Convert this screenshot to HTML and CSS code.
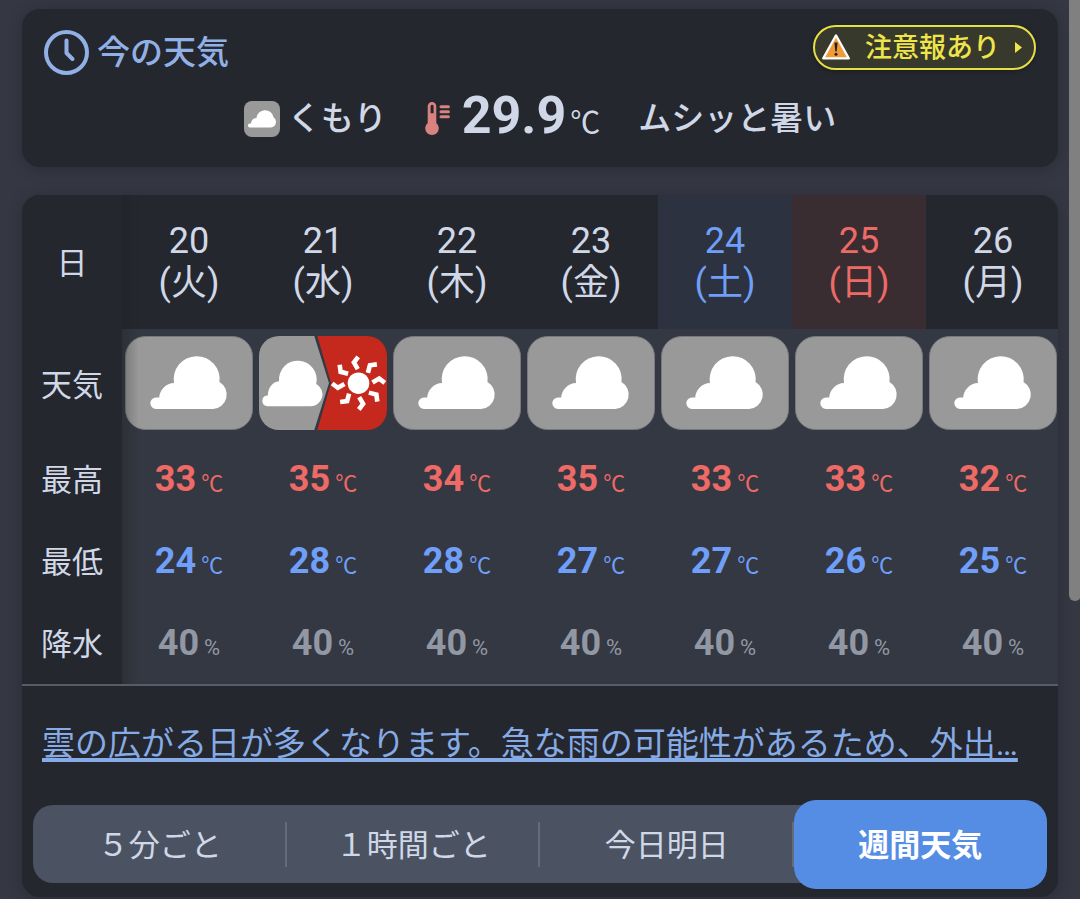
FILE: index.html
```html
<!DOCTYPE html>
<html lang="ja">
<head>
    <meta charset="UTF-8">
    <meta name="viewport" content="width=device-width, initial-scale=1.0">
    <title>今の天気</title>
    <link rel="stylesheet" href="styles.css">
</head>
<body>
    <!-- Shared icons -->
    <svg class="icon-defs" aria-hidden="true">
        <symbol id="cloudy" viewBox="0 0 128 94">
            <rect x="0.5" y="0.5" width="127" height="93" rx="20" fill="#999999" stroke="#77797d"/>
            <path fill="#fff" d="M31 73A5.7 5.7 0 0 1 31 61.6H34.2A15.5 15.5 0 0 1 49 47A23 23 0 1 1 94.5 46A14.5 14.5 0 0 1 88 73Z"/>
        </symbol>
        <symbol id="cloudy-sunny" viewBox="0 0 128 94">
            <clipPath id="tile"><rect width="128" height="94" rx="20"/></clipPath>
            <g clip-path="url(#tile)">
                <path fill="#999999" d="M0 0H55.3L70 47L55.3 94H0Z"/>
                <path fill="#c5281c" d="M58.3 0H128V94H58.3L72 47Z"/>
            </g>
            <path fill="#fff" d="M8 70.2A5.4 5.4 0 0 1 8 59.5H8.9A12 14 0 0 1 20 45.2A18.9 18.9 0 1 1 57.2 48A11.8 11.8 0 0 1 51 70.2Z"/>
            <g transform="translate(99.5 47.2)" fill="none" stroke="#fff" stroke-width="4.6">
                <circle r="10.8" fill="#fff" stroke="none"/>
                <path id="ray" d="M-0.3 -26.3L-4.6 -20.7L-0.7 -14"/>
                <use href="#ray" transform="rotate(45)"/>
                <use href="#ray" transform="rotate(90)"/>
                <use href="#ray" transform="rotate(135)"/>
                <use href="#ray" transform="rotate(180)"/>
                <use href="#ray" transform="rotate(225)"/>
                <use href="#ray" transform="rotate(270)"/>
                <use href="#ray" transform="rotate(315)"/>
            </g>
        </symbol>
    </svg>

    <main class="page">
        <!-- Current weather -->
        <section class="card now">
            <div class="now-head">
                <h1 class="now-title">
                    <svg class="clock" viewBox="0 0 45 45" fill="none" stroke="#91b0e6" stroke-width="4" aria-hidden="true">
                        <circle cx="22.5" cy="22.5" r="20.5"/>
                        <path d="M22.5 10.5V23L28.5 29" stroke-linecap="round" stroke-linejoin="round"/>
                    </svg>
                    今の天気
                </h1>
                <a class="alert" href="#">
                    <svg class="alert-mark" viewBox="0 0 30 28" aria-hidden="true">
                        <path d="M15 1.4L27.8 24.4H2.2Z" fill="#f39a38" stroke="#fff" stroke-width="2.2" stroke-linejoin="round"/>
                        <path d="M13.4 8.5H16.6L15.7 17.5H14.3Z" fill="#222"/>
                        <circle cx="15" cy="20.2" r="1.5" fill="#222"/>
                    </svg>
                    <span>注意報あり</span>
                    <svg class="alert-arrow" viewBox="0 0 7 11" aria-hidden="true"><path d="M0 0L7 5.5L0 11Z" fill="#efe44a"/></svg>
                </a>
            </div>
            <div class="now-body">
                <div class="now-sky">
                    <svg class="sky-icon" viewBox="0 0 36 36" aria-hidden="true">
                        <rect width="36" height="36" rx="8" fill="#999999"/>
                        <path fill="#fff" d="M6 26.6A2.1 2.1 0 0 1 6 22.4H7A6 6 0 0 1 12.4 17A8.7 8.7 0 0 1 29.6 16.2A5.8 5.8 0 0 1 27 26.6Z"/>
                    </svg>
                    くもり
                </div>
                <div class="now-temp">
                    <svg class="thermo" viewBox="0 0 25 34" aria-hidden="true">
                        <path fill="#d88380" fill-rule="evenodd" d="M2.7 4.3A4.3 4.3 0 0 1 11.3 4.3V21A6.8 6.8 0 1 1 2.7 21ZM5.6 4.2V11.3H8.6V4.2A1.5 1.5 0 0 0 5.6 4.2Z"/>
                        <path stroke="#d88380" stroke-width="3" stroke-linecap="round" d="M16 4.8H23.4M16 9.8H23.4M16 14.8H23.4"/>
                    </svg>
                    <span><b>29.9</b><small>℃</small></span>
                </div>
                <div>ムシッと暑い</div>
            </div>
        </section>

        <!-- Weekly forecast -->
        <section class="card week">
            <div class="week-wrap">
                <div class="week-scroll">
                    <table class="week-table">
                        <thead>
                            <tr>
                                <th class="label" scope="col">日</th>
                                <th scope="col">20<br>(火)</th>
                                <th scope="col">21<br>(水)</th>
                                <th scope="col">22<br>(木)</th>
                                <th scope="col">23<br>(金)</th>
                                <th class="sat" scope="col">24<br>(土)</th>
                                <th class="sun" scope="col">25<br>(日)</th>
                                <th scope="col">26<br>(月)</th>
                            </tr>
                        </thead>
                        <tbody>
                            <tr class="sky">
                                <th class="label" scope="row">天気</th>
                                <td><svg viewBox="0 0 128 94"><use href="#cloudy"/></svg></td>
                                <td><svg viewBox="0 0 128 94"><use href="#cloudy-sunny"/></svg></td>
                                <td><svg viewBox="0 0 128 94"><use href="#cloudy"/></svg></td>
                                <td><svg viewBox="0 0 128 94"><use href="#cloudy"/></svg></td>
                                <td><svg viewBox="0 0 128 94"><use href="#cloudy"/></svg></td>
                                <td><svg viewBox="0 0 128 94"><use href="#cloudy"/></svg></td>
                                <td><svg viewBox="0 0 128 94"><use href="#cloudy"/></svg></td>
                            </tr>
                            <tr class="high">
                                <th class="label" scope="row">最高</th>
                                <td><b>33</b><small>℃</small></td>
                                <td><b>35</b><small>℃</small></td>
                                <td><b>34</b><small>℃</small></td>
                                <td><b>35</b><small>℃</small></td>
                                <td><b>33</b><small>℃</small></td>
                                <td><b>33</b><small>℃</small></td>
                                <td><b>32</b><small>℃</small></td>
                            </tr>
                            <tr class="low">
                                <th class="label" scope="row">最低</th>
                                <td><b>24</b><small>℃</small></td>
                                <td><b>28</b><small>℃</small></td>
                                <td><b>28</b><small>℃</small></td>
                                <td><b>27</b><small>℃</small></td>
                                <td><b>27</b><small>℃</small></td>
                                <td><b>26</b><small>℃</small></td>
                                <td><b>25</b><small>℃</small></td>
                            </tr>
                            <tr class="rain">
                                <th class="label" scope="row">降水</th>
                                <td><b>40</b><small>%</small></td>
                                <td><b>40</b><small>%</small></td>
                                <td><b>40</b><small>%</small></td>
                                <td><b>40</b><small>%</small></td>
                                <td><b>40</b><small>%</small></td>
                                <td><b>40</b><small>%</small></td>
                                <td><b>40</b><small>%</small></td>
                            </tr>
                        </tbody>
                    </table>
                </div>
            </div>

            <a class="comment" href="#">雲の広がる日が多くなります。急な雨の可能性があるため、外出…</a>

            <nav class="tabs">
                <button type="button">５分ごと</button>
                <button type="button">１時間ごと</button>
                <button type="button">今日明日</button>
                <button type="button" class="active">週間天気</button>
            </nav>
        </section>
    </main>

    <div class="scroll-thumb"></div>
</body>
</html>
```
FILE: styles.css
```css
* {
    box-sizing: border-box;
}

body {
    margin: 0;
    background: #353743;
    color: #d0d8e8;
    font-family: Roboto, "Noto Sans CJK JP", sans-serif;
    overflow: hidden;
}

.icon-defs {
    position: absolute;
    width: 0;
    height: 0;
}

.page {
    display: flex;
    flex-direction: column;
    gap: 28px;
    padding: 9px 22px 2px;
}

.card {
    background: #24272e;
    border-radius: 18px;
    box-shadow: 0 2px 16px rgba(0, 0, 0, 0.2);
}

/* Current weather */
.now {
    padding: 16px 22px 12px;
    font-size: 33px;
    font-weight: 500;
}

.now-head {
    display: flex;
    align-items: flex-start;
    justify-content: space-between;
}

.now-title {
    display: flex;
    align-items: center;
    gap: 8px;
    margin: 0;
    padding-top: 5px;
    color: #91b0e6;
    font-size: 33px;
    font-weight: 500;
    line-height: 45px;
}

.clock {
    width: 45px;
    height: 45px;
}

.alert {
    display: flex;
    align-items: center;
    height: 45px;
    padding: 0 12px 0 6px;
    border: 2px solid #e8de45;
    border-radius: 23px;
    background: #37392d;
    box-shadow: 0 1px 4px rgba(0, 0, 0, 0.3);
    color: #efe44a;
    font-size: 27px;
    line-height: 40px;
    text-decoration: none;
}

.alert-mark {
    width: 30px;
    height: 28px;
    margin-right: 14px;
}

.alert-arrow {
    width: 7px;
    height: 11px;
    margin-left: 15px;
}

.now-body {
    display: flex;
    align-items: center;
    justify-content: center;
    gap: 38px;
    height: 72px;
    margin-top: 8px;
    line-height: 48px;
}

.now-sky,
.now-temp {
    display: flex;
    align-items: center;
    gap: 8px;
}

.now-temp {
    gap: 12px;
}

.sky-icon {
    width: 36px;
    height: 36px;
}

.thermo {
    width: 25px;
    height: 34px;
}

.now-temp b {
    font-size: 52px;
    font-weight: 700;
}

.now-temp small {
    margin-left: 4px;
    font-size: 30px;
    font-weight: 400;
}

/* Weekly forecast */
.week {
    overflow: hidden;
    padding-bottom: 8px;
}

.week-wrap {
    position: relative;
    border-bottom: 2px solid #575c66;
}

/* shade beside the fixed label column */
.week-wrap::after {
    content: "";
    position: absolute;
    top: 0;
    bottom: 0;
    left: 100px;
    width: 16px;
    background: linear-gradient(to right, rgba(32, 32, 32, 0.3), rgba(32, 32, 32, 0));
    pointer-events: none;
}

.week-scroll {
    overflow-x: auto;
    scrollbar-width: none;
}

.week-table {
    width: 100%;
    min-width: 1038px;
    border-collapse: collapse;
    table-layout: fixed;
    text-align: center;
}

.week-table th,
.week-table td {
    padding: 0;
    font-weight: 400;
}

.week-table thead th {
    height: 134px;
    font-size: 36px;
    line-height: 42px;
}

.week-table .label {
    position: sticky;
    left: 0;
    width: 100px;
    padding-top: 4px;
    background: #24272e;
    font-size: 31px;
    line-height: 42px;
}

.week-table .sat {
    background: #2c3240;
    color: #6f9ff8;
}

.week-table .sun {
    background: #392d32;
    color: #ee6a66;
}

.week-table td {
    height: 82px;
    padding-top: 6px;
    background: #343842;
    line-height: 42px;
}

.week-table .sky td {
    padding: 7px 3px 8px;
}

.sky svg {
    display: block;
    width: 100%;
}

.week-table td b {
    font-size: 36px;
    font-weight: 700;
}

.week-table td small {
    margin-left: 5px;
    font-size: 22px;
}

.high td {
    color: #ee6a66;
}

.low td {
    color: #6f9ff8;
}

.rain td {
    color: #9197a3;
}

.comment {
    display: block;
    overflow: hidden;
    margin: 34px 20px 0;
    color: #86abe6;
    font-size: 33px;
    line-height: 48px;
    white-space: nowrap;
    text-underline-offset: 3px;
    text-decoration-thickness: 4px;
    text-decoration-skip-ink: none;
}

/* Period tabs */
.tabs {
    display: flex;
    height: 78px;
    margin: 37px 11px 6px;
    border-radius: 20px;
    background: #4b5363;
}

.tabs button {
    position: relative;
    flex: 1;
    padding: 0 0 4px;
    border: 0;
    background: none;
    color: #d0d8e8;
    font-family: inherit;
    font-size: 31px;
}

.tabs button:not(.active)::after {
    content: "";
    position: absolute;
    top: 17px;
    right: 0;
    bottom: 16px;
    width: 2px;
    background: #646b79;
}

.tabs .active {
    margin: -5px 0 -6px;
    border-radius: 22px;
    background: #558de4;
    color: #fff;
    font-weight: 700;
}

.scroll-thumb {
    position: fixed;
    top: -12px;
    right: -1px;
    width: 12px;
    height: 613px;
    border-radius: 6px;
    background: #808080;
}
```
